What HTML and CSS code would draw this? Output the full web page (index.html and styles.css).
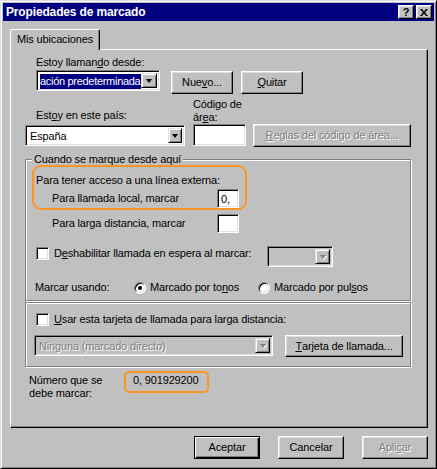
FILE: index.html
```html
<!DOCTYPE html>
<html lang="es">
<head>
<meta charset="utf-8">
<title>Propiedades de marcado</title>
<link rel="stylesheet" href="styles.css">
</head>
<body>
<div class="window">
  <div class="titlebar">
    <span class="title">Propiedades de marcado</span>
    <div class="title-btns">
      <span class="tbtn help">?</span>
      <span class="tbtn close"><svg width="8" height="7" viewBox="0 0 8 7"><path d="M0 0h2l2 2.4L6 0h2L5 3.5 8 7H6L4 4.6 2 7H0l3-3.5z" fill="#000"/></svg></span>
    </div>
  </div>
  <div class="client">
    <div class="tabs"><div class="tab">Mis ubicaciones</div></div>
    <div class="panel">
      <div class="row-a">Estoy llaman<u>d</u>o desde:</div>
      <div class="row-b">
        <div class="field combo loc"><span class="sel">ación predeterminada</span><span class="drop"><i class="arrow"></i></span></div>
        <div class="btn nuevo">Nue<u>v</u>o...</div>
        <div class="btn quitar"><u>Q</u>uitar</div>
      </div>
      <div class="row-cd">
        <div class="col-country">
          <div class="lbl">Est<u>o</u>y en este país:</div>
          <div class="field combo country"><span class="val">España</span><span class="drop"><i class="arrow"></i></span></div>
        </div>
        <div class="col-area">
          <div class="lbl">Código de<br>ár<u>e</u>a:</div>
          <div class="field area"></div>
        </div>
        <div class="btn disabled reglas"><u>R</u>eglas del código de área...</div>
      </div>

      <div class="group g1">
        <div class="group-title">Cuando se marque desde aquí</div>
        <div class="access">Para tener acceso a una línea externa:</div>
        <div class="dial-row local">
          <span class="dial-lbl">Para llamada local, marcar</span>
          <div class="field dial"><span class="val">0,</span></div>
        </div>
        <div class="dial-row long">
          <span class="dial-lbl">Para larga distancia, marcar</span>
          <div class="field dial"></div>
        </div>
        <div class="cw-row">
          <div class="chk-wrap"><span class="check"></span><span>D<u>e</u>shabilitar llamada en espera al marcar:</span></div>
          <div class="field combo disabled-field cw"><span class="val"></span><span class="drop"><i class="arrow dis"></i></span></div>
        </div>
        <div class="radio-row">
          <span class="radio-lbl">Marcar usando:</span>
          <span class="opt opt1"><span class="radio on"></span><span>Marcado por to<u>n</u>os</span></span>
          <span class="opt"><span class="radio"></span><span>Marcado por pul<u>s</u>os</span></span>
        </div>
      </div>

      <div class="group g2">
        <div class="chk-wrap usar"><span class="check"></span><span><u>U</u>sar esta tarjeta de llamada para larga distancia:</span></div>
        <div class="card-row">
          <div class="field combo disabled-field ninguna"><span class="val dis-text">Ninguna (marcado directo)</span><span class="drop"><i class="arrow dis"></i></span></div>
          <div class="btn tarjeta"><u>T</u>arjeta de llamada...</div>
        </div>
      </div>

      <div class="number-row">
        <div class="num-lbl">Número que se<br>debe marcar:</div>
        <div class="num-val">0, 901929200</div>
      </div>

      <div class="mark mark1"></div>
      <div class="mark mark2"></div>
    </div>
    <div class="actions">
      <div class="btn default">Aceptar</div>
      <div class="btn">Cancelar</div>
      <div class="btn disabled">Apli<u>c</u>ar</div>
    </div>
  </div>
</div>
</body>
</html>
```

FILE: styles.css
```css
* { box-sizing: border-box; }
html, body { margin: 0; padding: 0; }
body {
  width: 437px; height: 469px; overflow: hidden;
  background: #c0c0c0;
  font-family: "Liberation Sans", Arial, sans-serif;
  font-size: 11px; line-height: 13px; color: #000;
  letter-spacing: -0.15px;
}
u { text-decoration: underline; text-underline-offset: 1px; }

.window {
  width: 437px; height: 469px; padding: 2px;
  border: 1px solid; border-color: #dfdfdf #000 #000 #dfdfdf;
  box-shadow: inset 1px 1px #fff, inset -1px -1px #808080;
  background: #c0c0c0;
}
.titlebar {
  height: 18px; background: #000080; color: #fff;
  display: flex; align-items: center; justify-content: space-between;
  padding: 0 2px 0 3px;
}
.title { font-weight: bold; font-size: 12px; letter-spacing: -0.15px; }
.title-btns { display: flex; gap: 2px; }
.tbtn {
  width: 16px; height: 14px; background: #c0c0c0; color: #000;
  border: 1px solid; border-color: #fff #000 #000 #fff;
  box-shadow: inset -1px -1px #808080, inset 1px 1px #dfdfdf;
  display: flex; align-items: center; justify-content: center;
  font-weight: bold; font-size: 11px; line-height: 11px; letter-spacing: 0;
}
.tbtn.close svg { display: block; }

.client { padding: 8px 6px 0 7px; }
.tabs { display: flex; }
.tab {
  width: 90px; height: 21px; margin-bottom: -1px; position: relative; z-index: 1;
  background: #c0c0c0;
  border-top: 1px solid #fff; border-left: 1px solid #fff; border-right: 1px solid #000;
  border-radius: 2px 2px 0 0;
  box-shadow: inset -1px 0 #808080;
  text-align: center; padding-top: 3px;
}
.panel {
  position: relative;
  width: 418px; height: 379px;
  border: 1px solid; border-color: #fff #000 #000 #fff;
  box-shadow: inset -1px -1px #808080;
}

/* sunken fields */
.field, .check {
  background: #fff;
  border: 1px solid; border-color: #808080 #fff #fff #808080;
  box-shadow: inset 1px 1px #000, inset -1px -1px #dfdfdf;
}
.disabled-field { background: #c0c0c0; }
.combo { display: flex; padding: 2px; }
.combo .val { flex: 1; min-width: 0; white-space: nowrap; overflow: hidden; padding-left: 2px; line-height: 17px; }
.drop {
  flex: 0 0 16px; background: #c0c0c0;
  border: 1px solid; border-color: #dfdfdf #000 #000 #dfdfdf;
  box-shadow: inset 1px 1px #fff, inset -1px -1px #808080;
  display: flex; align-items: center; justify-content: center;
}
.arrow {
  display: block; width: 1px; height: 0;
  border-left: 3px solid transparent; border-right: 3px solid transparent;
  border-top: 4px solid #000; margin-top: 1px;
}
.arrow.dis { border-top-color: #808080; filter: drop-shadow(1px 1px 0 #fff); }

/* buttons */
.btn {
  height: 23px; background: #c0c0c0;
  border: 1px solid; border-color: #fff #000 #000 #fff;
  box-shadow: inset -1px -1px #808080, inset 1px 1px #dfdfdf;
  display: flex; align-items: center; justify-content: center;
  white-space: nowrap;
}
.btn.disabled, .dis-text { color: #808080; text-shadow: 1px 1px 0 #fff; }
.btn.default {
  border-color: #000;
  box-shadow: inset 1px 1px #fff, inset -1px -1px #000, inset -2px -2px #808080;
}

.row-a { margin: 6px 0 0 25px; height: 13px; }
.row-b { display: flex; align-items: flex-start; margin-top: 1px; height: 24px; }
.loc { margin-left: 25px; width: 124px; height: 21px; }
.loc .sel {
  flex: 1; min-width: 0; overflow: hidden; white-space: nowrap;
  background: #000080; color: #fff; height: 15px; line-height: 15px;
  margin: 1px 0 0 1px; letter-spacing: -0.3px;
}
.nuevo { margin: 1px 0 0 11px; width: 62px; }
.quitar { margin: 1px 0 0 8px; width: 62px; }

.row-cd { display: flex; align-items: flex-start; margin-top: 4px; }
.col-country { margin-left: 14px; width: 160px; padding-top: 11px; }
.col-country .lbl { padding-left: 11px; }
.country { margin-top: 3px; height: 21px; }
.country .drop { flex-basis: 14px; }
.col-area { margin-left: 8px; width: 53px; }
.area { height: 22px; }
.reglas { margin: 26px 0 0 7px; width: 158px; }

/* group boxes */
.group {
  margin-left: 14px; width: 386px;
  border: 1px solid #808080;
  box-shadow: 1px 1px 0 #fff, inset 1px 1px 0 #fff;
}
.g1 { margin-top: 12px; height: 142px; }
.g2 { margin-top: 1px; height: 65px; }
.group-title {
  width: fit-content; margin: -7px 0 0 6px; padding: 0 2px;
  background: #c0c0c0; height: 13px;
}
.access { margin: 8px 0 0 10px; height: 13px; }
.dial-row { display: flex; align-items: center; height: 19px; }
.dial-row.local { margin-top: 2px; }
.dial-row.long { margin-top: 6px; }
.dial-lbl { margin-left: 26px; width: 165px; }
.dial { width: 22px; height: 19px; padding: 2px 0 0 3px; }
.dial .val { line-height: 14px; }

.cw-row { display: flex; align-items: flex-start; margin-top: 13px; height: 21px; }
.chk-wrap { display: flex; align-items: center; gap: 5px; height: 13px; }
.cw-row .chk-wrap { margin: 1px 0 0 10px; width: 231px; }
.check { width: 13px; height: 13px; flex: 0 0 13px; }
.cw { width: 66px; height: 21px; }
.cw .drop { flex-basis: 15px; }

.radio-row { display: flex; align-items: center; margin-top: 14px; height: 13px; }
.radio-lbl { margin-left: 9px; width: 99px; }
.opt { display: flex; align-items: center; gap: 4px; }
.opt1 { width: 124px; }
.radio {
  width: 12px; height: 12px; flex: 0 0 12px; border-radius: 50%; background: #fff;
  border: 1px solid; border-color: #808080 #fff #fff #808080;
  box-shadow: inset 1px 1px #000, inset -1px -1px #dfdfdf;
  display: flex; align-items: center; justify-content: center;
}
.radio.on::after { content: ""; width: 4px; height: 4px; border-radius: 50%; background: #000; }

.usar { margin: 10px 0 0 10px; }
.card-row { display: flex; align-items: flex-start; margin-top: 9px; }
.ninguna { margin-left: 8px; width: 239px; height: 21px; }
.ninguna .drop { flex-basis: 15px; }
.tarjeta { margin-left: 12px; width: 118px; height: 22px; }

.number-row { display: flex; margin: 7px 0 0 18px; }
.num-lbl { width: 104px; }

.mark { position: absolute; border: 2.5px solid #fd9523; }
.mark1 { left: 21px; top: 115px; width: 215px; height: 45px; border-radius: 9px; }
.mark2 { left: 113px; top: 321px; width: 85px; height: 22px; border-radius: 5px; }

.actions { display: flex; justify-content: flex-end; gap: 18px; margin-top: 8px; }
.actions .btn { width: 66px; }
```
